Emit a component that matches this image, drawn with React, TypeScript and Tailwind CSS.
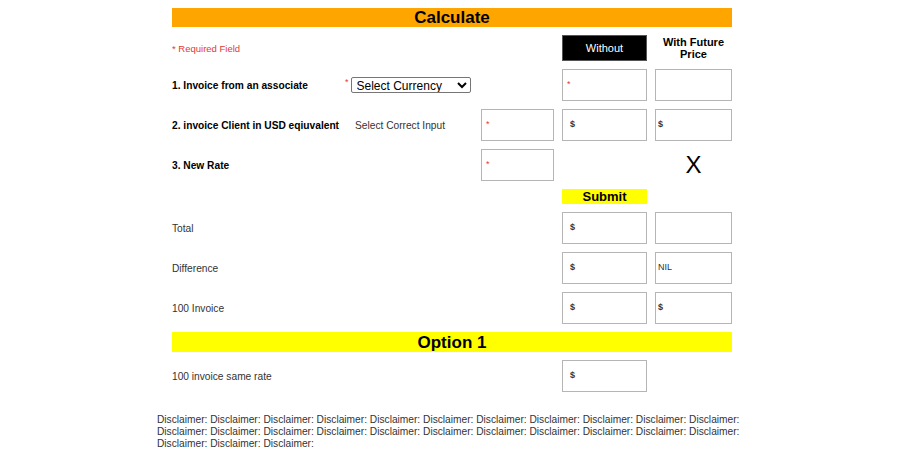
import React from 'react';

const font = { fontFamily: '"Liberation Sans", Arial, sans-serif' };

function Box({ children, tight = false, className = '' }: { children?: React.ReactNode; tight?: boolean; className?: string }) {
  return (
    <div
      className={`h-8 border border-[#b5b5b5] flex items-center text-[9px] font-bold text-[#333] ${tight ? 'pl-[2px]' : 'pl-[7px]'} ${className}`}
    >
      {children}
    </div>
  );
}

function Star() {
  return <span className="text-[#e53935] text-[9px] font-normal -ml-[3px]">*</span>;
}

export default function App() {
  return (
    <div className="w-[900px] h-[474px] bg-white overflow-hidden" style={font}>
      <div className="w-[560px] ml-[172px] pt-2 flex flex-col gap-2">
        <div className="h-[19px] bg-[#ffa500] flex items-center justify-center text-[17px] font-bold text-black leading-none">
          Calculate
        </div>

        <div className="grid grid-cols-[165px_128px_73px_85px_77px] gap-x-2 gap-y-2 items-center text-[10.2px] text-[#222] whitespace-nowrap">
          {/* header */}
          <div className="col-span-3 text-[9.5px] text-[#e53935] pt-[3px]">* Required Field</div>
          <div className="h-[26px] bg-black border border-[#555] text-white flex items-center justify-center text-[11px]">
            Without
          </div>
          <div className="text-center font-bold text-[11px] leading-[12px] text-black">
            With Future
            <br />
            Price
          </div>

          {/* row 1 */}
          <div className="font-bold text-black pt-[2px]">1. Invoice from an associate</div>
          <div className="col-span-2 flex items-center gap-[2px]">
            <span className="text-[#e53935] text-[9px] -mt-1">*</span>
            <select
              className="w-[120px] h-4 border border-[#767676] rounded-[2px] text-[12px] text-black bg-white px-[1px]"
              style={font}
              defaultValue=""
            >
              <option value="">Select Currency</option>
            </select>
          </div>
          <Box>
            <Star />
          </Box>
          <Box />

          {/* row 2 */}
          <div className="font-bold text-black pt-[2px]">2. invoice Client in USD eqiuvalent</div>
          <div className="pl-[10px] text-[#333] pt-[2px]">Select Correct Input</div>
          <Box>
            <Star />
          </Box>
          <Box>$</Box>
          <Box tight>$</Box>

          {/* row 3 */}
          <div className="font-bold text-black pt-[2px]">3. New Rate</div>
          <div />
          <Box>
            <Star />
          </Box>
          <div />
          <div className="text-center text-[24px] text-black leading-none">X</div>

          {/* submit */}
          <div className="col-span-3" />
          <div className="h-[15px] bg-[#ffff00] flex items-center justify-center text-[13px] font-bold text-black">
            Submit
          </div>
          <div />

          {/* totals */}
          <div className="col-span-3 text-[#333] pt-[2px]">Total</div>
          <Box>$</Box>
          <Box />

          <div className="col-span-3 text-[#333] pt-[2px]">Difference</div>
          <Box>$</Box>
          <Box tight className="font-normal">NIL</Box>

          <div className="col-span-3 text-[#333] pt-[2px]">100 Invoice</div>
          <Box>$</Box>
          <Box tight>$</Box>
        </div>

        <div className="h-5 bg-[#ffff00] flex items-center justify-center text-[17px] font-bold text-black leading-none">
          Option 1
        </div>

        <div className="grid grid-cols-[165px_128px_73px_85px_77px] gap-x-2 items-center text-[10.2px] text-[#333]">
          <div className="col-span-3 pt-[2px]">100 invoice same rate</div>
          <Box>$</Box>
          <div />
        </div>
      </div>

      <p className="w-[592px] ml-[157px] mt-[22px] text-[10.2px] leading-[12px] text-[#333]">
        {Array.from({ length: 25 }, () => 'Disclaimer:').join(' ')}
      </p>
    </div>
  );
}
